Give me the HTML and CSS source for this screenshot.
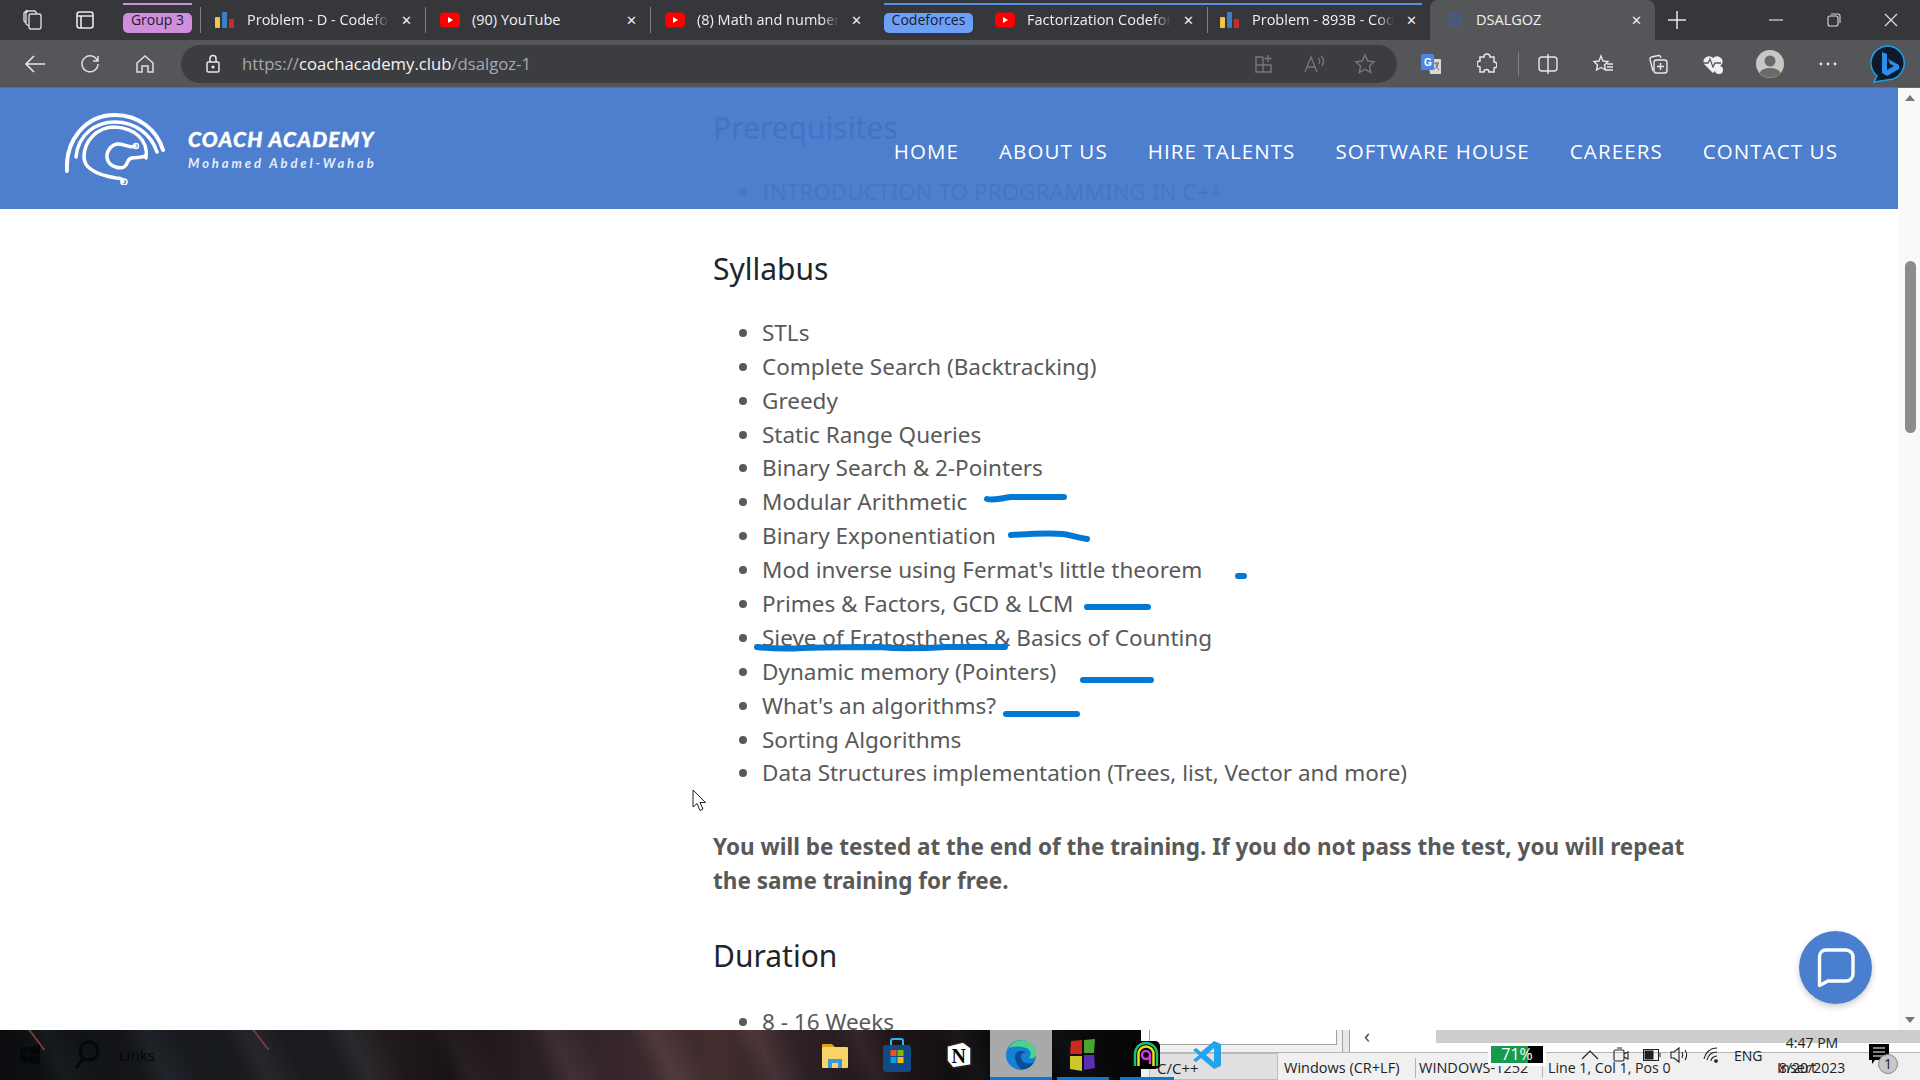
FILE: index.html
```html
<!DOCTYPE html>
<html>
<head>
  <title>DSALGOZ</title>
  <link rel="stylesheet" href="styles.css">
</head>
<body>
  <!-- browser chrome -->
  <div class="tabstrip">
    <div class="strip-btn">
      <svg width="24" height="24" viewBox="0 0 24 24" fill="none" stroke="#d8d8d8" stroke-width="1.4"><rect x="8" y="6" width="12" height="15" rx="2"/><path d="M8 18 5 16V5l2-2h7l2 3M5 15 3 13V5l3-3"/></svg>
    </div>
    <div class="strip-btn strip-btn-2">
      <svg width="20" height="20" viewBox="0 0 20 20" fill="none" stroke="#e8e8e8" stroke-width="1.6"><rect x="2" y="2" width="16" height="16" rx="2.5"/><path d="M2 6h16M6 6v12"/></svg>
    </div>
    <div class="group group-purple">Group 3</div>
    <div class="tab">
      <svg class="fav" width="20" height="16" viewBox="0 0 20 16"><rect x="0" y="5" width="5" height="11" rx="1" fill="#f6c445"/><rect x="7" y="0" width="5" height="16" rx="1" fill="#3b7fc4"/><rect x="14" y="7" width="5" height="9" rx="1" fill="#c62c2c"/></svg>
      <span class="tab-title">Problem - D - Codefo</span><span class="tab-x">✕</span>
    </div>
    <div class="tab">
      <svg class="fav" width="20" height="16" viewBox="0 0 20 16"><rect width="20" height="15" y="0.5" rx="4" fill="#f00"/><path d="M8 5l5 3-5 3z" fill="#fff"/></svg>
      <span class="tab-title tab-title-full">(90) YouTube</span><span class="tab-x">✕</span>
    </div>
    <div class="tab">
      <svg class="fav" width="20" height="16" viewBox="0 0 20 16"><rect width="20" height="15" y="0.5" rx="4" fill="#f00"/><path d="M8 5l5 3-5 3z" fill="#fff"/></svg>
      <span class="tab-title">(8) Math and number</span><span class="tab-x">✕</span>
    </div>
    <div class="tab-group">
      <div class="group group-blue">Codeforces</div>
      <div class="tab tab-factor">
        <svg class="fav" width="20" height="16" viewBox="0 0 20 16"><rect width="20" height="15" y="0.5" rx="4" fill="#f00"/><path d="M8 5l5 3-5 3z" fill="#fff"/></svg>
        <span class="tab-title">Factorization Codefor</span><span class="tab-x">✕</span>
      </div>
      <div class="tab tab-last">
        <svg class="fav" width="20" height="16" viewBox="0 0 20 16"><rect x="0" y="5" width="5" height="11" rx="1" fill="#f6c445"/><rect x="7" y="0" width="5" height="16" rx="1" fill="#3b7fc4"/><rect x="14" y="7" width="5" height="9" rx="1" fill="#c62c2c"/></svg>
        <span class="tab-title">Problem - 893B - Cod</span><span class="tab-x">✕</span>
      </div>
    </div>
    <div class="tab tab-active">
      <svg class="fav" width="18" height="18" viewBox="0 0 18 18" fill="none" stroke="#3a5f9e" stroke-width="2"><circle cx="9" cy="9" r="6"/><circle cx="9" cy="9" r="2" stroke-width="1.5"/></svg>
      <span class="tab-title tab-title-full">DSALGOZ</span><span class="tab-x">✕</span>
    </div>
    <div class="new-tab">
      <svg width="20" height="20" viewBox="0 0 20 20" stroke="#e8e8e8" stroke-width="1.5"><path d="M10 1v18M1 10h18"/></svg>
    </div>
    <div class="window-btns">
      <svg width="14" height="14" viewBox="0 0 14 14" stroke="#ddd" stroke-width="1.2"><path d="M0 7h14"/></svg>
      <svg width="14" height="14" viewBox="0 0 14 14" fill="none" stroke="#ddd" stroke-width="1.1"><rect x="1" y="3" width="10" height="10" rx="2"/><path d="M4 1h7a2 2 0 0 1 2 2v7"/></svg>
      <svg width="14" height="14" viewBox="0 0 14 14" stroke="#ddd" stroke-width="1.2"><path d="M1 1l12 12M13 1 1 13"/></svg>
    </div>
  </div>

  <div class="toolbar">
    <div class="tool tool-first">
      <svg width="22" height="20" viewBox="0 0 22 20" fill="none" stroke="#e8e8e8" stroke-width="1.6"><path d="M21 10H2M10 2l-8 8 8 8"/></svg>
    </div>
    <div class="tool">
      <svg width="20" height="20" viewBox="0 0 20 20" fill="none" stroke="#e0e0e0" stroke-width="1.5"><path d="M17.5 7A8 8 0 1 0 18 10M18 2v5h-5"/></svg>
    </div>
    <div class="tool">
      <svg width="20" height="20" viewBox="0 0 20 20" fill="none" stroke="#e0e0e0" stroke-width="1.5"><path d="M2 9l8-7 8 7v9h-5v-6H7v6H2z"/></svg>
    </div>
    <div class="addressbar">
      <svg class="lock" width="16" height="20" viewBox="0 0 16 20" fill="none" stroke="#e8e8e8" stroke-width="1.5"><rect x="2" y="8" width="12" height="10" rx="1.5"/><path d="M5 8V4.5a3 3 0 0 1 6 0V8"/><circle cx="8" cy="13" r=".8" fill="#e8e8e8"/></svg>
      <span class="url">https://<b>coachacademy.club</b>/dsalgoz-1</span>
      <div class="addr-icons">
        <svg width="20" height="20" viewBox="0 0 20 20" fill="none" stroke="#77787c" stroke-width="1.4"><path d="M9 3H2v15h15v-7H2M9 3v15M14 1v7M10.5 4.5h7"/></svg>
        <svg width="22" height="20" viewBox="0 0 22 20" fill="none" stroke="#77787c" stroke-width="1.3"><path d="M2 18 8 3l6 15M4 13h8M15 4c2 1 2 4 1 6M18 2c3 2 3 7 1 10"/></svg>
        <svg width="22" height="22" viewBox="0 0 22 22" fill="none" stroke="#77787c" stroke-width="1.4"><path d="M11 2l2.8 6 6.2.7-4.6 4.3 1.3 6.5L11 16.2 5.300 19.500 6.600 13 2 8.700 8.200 8z"/></svg>
      </div>
    </div>
    <div class="tool-right">
      <svg class="t-translate" width="22" height="22" viewBox="0 0 22 22"><path d="M8 6h12a1 1 0 0 1 1 1v14H10z" fill="#d8d8d8"/><rect x="1" y="1" width="13" height="16" rx="1.5" fill="#4a86e8"/><text x="4" y="13" font-size="10" font-weight="700" fill="#fff" font-family="Liberation Sans">G</text><path d="M14 10h5M16 10c0 3 1 5 3 7M18 10c0 3-2 5-4 6" stroke="#666" fill="none"/></svg>
      <svg class="t-ext" width="20" height="22" viewBox="0 0 20 22" fill="none" stroke="#e8e8e8" stroke-width="1.5"><path d="M7 4a3 3 0 0 1 6 0h4v5a3 3 0 0 1 0 6v4H12a2.5 2.5 0 0 0-5 0H3v-5a3 3 0 0 1 0-6V4z"/></svg>
      <span class="t-sep"></span>
      <svg class="t-split" width="20" height="20" viewBox="0 0 20 20" fill="none" stroke="#e8e8e8" stroke-width="1.4"><rect x="1" y="3" width="18" height="14" rx="3"/><path d="M10 0v20"/></svg>
      <svg class="t-favs" width="22" height="20" viewBox="0 0 22 20" fill="none" stroke="#e8e8e8" stroke-width="1.4"><path d="M9 2l2 5 5 .5-3.5 3.500 1 5L9 13.500 4.500 16l1-5L2 7.500 7 7zM15 10h6M15 13h6M13 16h8"/></svg>
      <svg class="t-coll" width="22" height="22" viewBox="0 0 22 22" fill="none" stroke="#e8e8e8" stroke-width="1.4"><path d="M6 18 3 6.500a2 2 0 0 1 1.500-2.500l7-1.500a2 2 0 0 1 2 1l.5 1.500"/><rect x="7" y="7" width="13" height="13" rx="2.5"/><path d="M13.5 10v7M10 13.500h7"/></svg>
      <svg class="t-health" width="24" height="22" viewBox="0 0 24 22"><path d="M12 20 3 11a5.500 5.500 0 0 1 9-6 5.500 5.500 0 0 1 9 6z" fill="#f0f0f0"/><path d="M2 10h5l2-4 3 8 2-4h6" fill="none" stroke="#55565a" stroke-width="1.3"/><circle cx="18" cy="17" r="4" fill="#f0f0f0"/></svg>
      <svg class="t-avatar" width="28" height="28" viewBox="0 0 28 28"><circle cx="14" cy="14" r="14" fill="#c9c7c3"/><circle cx="14" cy="11" r="5.5" fill="#6b6a68"/><path d="M3.500 23a11 7 0 0 1 21 0 14 14 0 0 1-21 0z" fill="#6b6a68"/></svg>
      <svg class="t-more" width="18" height="4" viewBox="0 0 18 4" fill="#e8e8e8"><circle cx="2" cy="2" r="1.4"/><circle cx="9" cy="2" r="1.4"/><circle cx="16" cy="2" r="1.4"/></svg>
      <svg class="t-bing" width="38" height="38" viewBox="0 0 38 38"><path d="M19 1a17 17 0 0 1 6 33L6 37l3-6A17 17 0 0 1 19 1z" fill="#0c1a2b" stroke="#1aa0e8" stroke-width="1.5"/><path d="M14 7l5 2v16l7-4-4-2-2-5 11 6v4l-12 7-5-3z" fill="#2a8fe6"/></svg>
    </div>
  </div>

  <!-- page area -->
  <div class="viewport">
    <div class="page">
      <div class="content">
        <h2 class="heading-first">Prerequisites</h2>
        <ul>
          <li>INTRODUCTION TO PROGRAMMING IN C++</li>
        </ul>
        <h2>Syllabus</h2>
        <ul>
          <li>STLs</li>
          <li>Complete Search (Backtracking)</li>
          <li>Greedy</li>
          <li>Static Range Queries</li>
          <li>Binary Search &amp; 2-Pointers</li>
          <li>Modular Arithmetic</li>
          <li>Binary Exponentiation</li>
          <li>Mod inverse using Fermat's little theorem</li>
          <li>Primes &amp; Factors, GCD &amp; LCM</li>
          <li>Sieve of Eratosthenes &amp; Basics of Counting</li>
          <li>Dynamic memory (Pointers)</li>
          <li>What's an algorithms?</li>
          <li>Sorting Algorithms</li>
          <li>Data Structures implementation (Trees, list, Vector and more)</li>
        </ul>
        <p class="note">You will be tested at the end of the training. If you do not pass the test, you will repeat the same training for free.</p>
        <h2 class="heading-duration">Duration</h2>
        <ul>
          <li>8 - 16 Weeks</li>
        </ul>
      </div>

      <!-- pen marks drawn on top of the page -->
      <svg class="ink" width="1898" height="942" viewBox="0 88 1898 942" fill="none" stroke="#0078d4" stroke-width="6" stroke-linecap="round" stroke-linejoin="round">
        <path d="M987 499c6 2 14-1 24-2h53"/>
        <path d="M1011 535c16-1 38-2 52-1 8 1 14 4 24 5"/>
        <path d="M1238 576h6"/>
        <path d="M1087 607h61"/>
        <path d="M757 647c18 2 30 2 46 1 22-1 60-1 76-1 22 2 50 1 68 0 20 0 40 0 58 0"/>
        <path d="M1083 680h68"/>
        <path d="M1006 714h71"/>
      </svg>

      <header class="site-header">
        <div class="brand">
          <svg class="brand-logo" width="100" height="72" viewBox="0 0 100 72" fill="none" stroke="#fff" stroke-width="3.5" stroke-linecap="round">
            <path d="M2 58C0 28 20 2 50 2c24 0 42 15 48 35" stroke-width="4"/>
            <path d="M11 44C13 22 30 9 50 9c20 0 36 12 42 30"/>
            <path d="M81 45C84 26 68 15 50 14 32 14 19 28 19 44c0 12 14 18 32 21 6 0 7 2 7 4"/>
            <path d="M70 33c-6 3-10-3-18-2-8 2-12 10-9 17 3 6 12 8 16 6 5-3 2-8 8-9 6-1 12 0 14-3"/>
            <circle cx="71" cy="33" r="2.5" stroke-width="1.5"/>
            <circle cx="59" cy="69" r="3" stroke-width="1.5"/>
          </svg>
          <div class="brand-text">
            <div class="brand-name">COACH ACADEMY</div>
            <div class="brand-sub">Mohamed Abdel-Wahab</div>
          </div>
        </div>
        <nav class="nav">
          <a>HOME</a>
          <a>ABOUT US</a>
          <a>HIRE TALENTS</a>
          <a>SOFTWARE HOUSE</a>
          <a>CAREERS</a>
          <a>CONTACT US</a>
        </nav>
      </header>

      <div class="chat-btn">
        <svg width="40" height="42" viewBox="0 0 40 42" fill="none" stroke="#fff" stroke-width="3.4" stroke-linejoin="round"><path d="M10 3h20a7 7 0 0 1 7 7v17a7 7 0 0 1-7 7H12l-8.500 4.500V9.500A6.500 6.500 0 0 1 10 3z"/></svg>
      </div>

      <svg class="cursor" width="14" height="23" viewBox="0 0 14 23"><path d="M1 1v17l4-3.500 3 7 3-1.500-3-6.500h5.500z" fill="#fff" stroke="#222" stroke-width="1"/></svg>
    </div>

    <div class="scrollbar">
      <span class="arrow-up"></span>
      <div class="thumb"></div>
      <span class="arrow-down"></span>
    </div>
  </div>

  <!-- taskbar with another window showing through on the right -->
  <div class="taskbar">
    <div class="wallpaper">
      <svg class="start" width="20" height="20" viewBox="0 0 20 20" fill="#050608"><path d="M0 3l8-1v7.500H0zM9 2l11-2v9.500H9zM0 10.500h8V18l-8-1zM9 10.500h11V20L9 18z"/></svg>
      <svg class="search" width="26" height="30" viewBox="0 0 26 30" fill="none" stroke="#060709" stroke-width="3"><circle cx="15" cy="11" r="9"/><path d="M9 19 2 28"/></svg>
      <span class="links">Links</span>
      <div class="task-icons">
        <div class="task-app">
          <svg width="28" height="26" viewBox="0 0 28 26"><path d="M1 2h10l3 3H1z" fill="#d9a31c"/><rect x="1" y="5" width="26" height="21" rx="1" fill="#f7d569"/><path d="M7 26v-9h14v9h-4v-5h-6v5z" fill="#3a96dd"/></svg>
        </div>
        <div class="task-app">
          <svg width="30" height="34" viewBox="0 0 30 34"><path d="M9 8V3a2 2 0 0 1 2-2h8a2 2 0 0 1 2 2v5" fill="none" stroke="#35b4ec" stroke-width="2"/><rect x="1" y="7" width="28" height="27" rx="3" fill="#114a85"/><rect x="8.5" y="12" width="6" height="6" fill="#f25022"/><rect x="15.5" y="12" width="6" height="6" fill="#7fba00"/><rect x="8.5" y="19" width="6" height="6" fill="#00a4ef"/><rect x="15.5" y="19" width="6" height="6" fill="#ffb900"/></svg>
        </div>
        <div class="task-app">
          <svg width="28" height="28" viewBox="0 0 28 28"><path d="M2 5l16-4 8 6v17l-18 3-6-7z" fill="#fff" stroke="#222" stroke-width="1.5"/><text x="6.500" y="22" font-size="20" font-weight="700" font-family="Liberation Serif" fill="#000">N</text></svg>
        </div>
        <div class="task-app task-edge">
          <svg width="30" height="30" viewBox="0 0 30 30"><circle cx="15" cy="15" r="15" fill="#1581d4"/><path d="M2 9C6 1 15-1 21 1c6 2 9 8 9 13 0 4-4 5-7 4 3-3 2-9-3-10C13 6 6 6 2 9z" fill="#4fd38a"/><path d="M9 16c0-5 8-7 11-3-3-1-6 1-5 5 1 5 8 7 13 4-3 5-8 8-13 7 0 0-6-5-6-13z" fill="#0d4d96"/></svg>
          <span class="underline"></span>
        </div>
        <div class="task-app task-win">
          <svg width="28" height="34" viewBox="0 0 28 34"><path d="M2 3l11-1v14H1z" fill="#c92b1f"/><path d="M15 2l11-1-1 14H15z" fill="#4aa62f"/><path d="M1 18h12v15L1 31z" fill="#cdc72c"/><path d="M15 17h10l1 13-11 2z" fill="#5b2fb0"/></svg>
          <span class="underline"></span>
        </div>
      </div>
    </div>
    <div class="behind">
      <div class="behind-top">
        <div class="cell"><div class="cell-inner"></div></div>
        <div class="gutter"></div>
        <div class="hscroll">
          <span class="hscroll-arrow">‹</span>
          <div class="hscroll-thumb"></div>
        </div>
      </div>
      <div class="statusbar">
        <span class="st st-lang">C/C++</span>
        <span class="st st-eol">Windows (CR+LF)</span>
        <span class="st st-enc">WINDOWS-1252</span>
        <span class="st st-pos">Line 1, Col 1, Pos 0</span>
        <span class="st st-ins">Insert</span>
      </div>
      <div class="task-app task-arc">
        <svg width="28" height="28" viewBox="0 0 28 28"><rect width="28" height="28" rx="5" fill="#000"/><path d="M3 25V13a11 11 0 0 1 22 0v12" fill="none" stroke="#16c172" stroke-width="2.5"/><path d="M6.500 25V13a7.500 7.500 0 0 1 15 0v12" fill="none" stroke="#e8e020" stroke-width="2.5"/><circle cx="14" cy="14" r="4" fill="none" stroke="#d03ad8" stroke-width="2.5"/><path d="M18 14v9" stroke="#d03ad8" stroke-width="2.5"/></svg>
        <span class="underline"></span>
      </div>
      <svg class="vscode" width="30" height="30" viewBox="0 0 30 30"><path d="M22 1l7 3v22l-7 3-13-11-5 4-3-2 6-5-6-5 3-2 5 4zM22 8l-8 7 8 7z" fill="#23a3ea"/></svg>
      <div class="cpu"><span class="cpu-text">71%</span></div>
      <div class="tray">
        <svg width="18" height="10" viewBox="0 0 18 10" fill="none" stroke="#222" stroke-width="1.2"><path d="M1 9l8-8 8 8"/></svg>
        <svg width="16" height="16" viewBox="0 0 16 16" fill="none" stroke="#222" stroke-width="1.1"><rect x="1" y="3" width="10" height="11" rx="1.5"/><path d="M11 7l4-2v7l-4-2M4 1h5"/></svg>
        <svg width="18" height="12" viewBox="0 0 18 12" fill="none" stroke="#222"><rect x=".5" y=".5" width="15" height="11"/><rect x="2" y="2" width="8" height="8" fill="#222"/><path d="M17 4v4"/></svg>
        <svg class="tray-vol" width="20" height="18" viewBox="0 0 20 18" fill="none" stroke="#222" stroke-width="1.1"><path d="M1 6h3l5-4v14l-5-4H1zM12 6c1 2 1 4 0 6M15 4c2 3 2 7 0 10"/></svg>
        <svg class="tray-wifi" width="18" height="16" viewBox="0 0 18 16" fill="none" stroke="#222" stroke-width="1.1"><path d="M1 12C2 6 7 1 14 1M4 13c1-4 4-8 10-8M8 14c0-2 2-5 6-5"/><circle cx="13" cy="14" r="1.3" fill="#222"/></svg>
        <span class="tray-lang">ENG</span>
      </div>
      <div class="clock">
        <div>4:47 PM</div>
        <div class="clock-date">8/20/2023</div>
      </div>
      <div class="notif">
        <svg width="20" height="20" viewBox="0 0 20 20"><path d="M0 0h20v16H6l-3 4v-4H0z" fill="#000"/><path d="M4 4h12M4 8h12M4 12h12" stroke="#fff" stroke-width="1.2"/></svg>
        <span class="notif-count">1</span>
      </div>
    </div>
  </div>
</body>
</html>
```

FILE: styles.css
```css
* {
  box-sizing: border-box;
}

body {
  margin: 0;
  width: 1920px;
  height: 1080px;
  overflow: hidden;
  display: flex;
  flex-direction: column;
  font-family: "Noto Sans", "Open Sans", sans-serif;
  background: #fff;
}

/* tab strip */
.tabstrip {
  height: 40px;
  background: #36373b;
  display: flex;
  align-items: center;
  font-family: "Open Sans", "Noto Sans", sans-serif;
  color: #f0f0f0;
  font-size: 14.5px;
  flex: none;
}

.strip-btn {
  width: 24px;
  margin-left: 21px;
  display: flex;
}

.strip-btn-2 {
  margin-left: 30px;
  width: 20px;
  margin-right: 28px;
}

.group {
  height: 20px;
  margin-top: 5px;
  border-radius: 5px;
  color: #1c1c28;
  font-size: 14px;
  line-height: 13px;
  text-align: center;
  position: relative;
  flex: none;
}

.group-purple {
  width: 69px;
  background: #cf8fdc;
  margin-right: 8px;
}

.group-purple::before {
  content: "";
  position: absolute;
  left: 0;
  right: 0;
  top: -10px;
  height: 2px;
  background: #cf8fdc;
}

.group-blue {
  width: 89px;
  background: #6ca0f6;
}

.tab {
  width: 225px;
  height: 40px;
  flex: none;
  display: flex;
  align-items: center;
  padding: 0 12px 1px 14px;
  position: relative;
  border-left: 1px solid #808185;
  border-image: linear-gradient(transparent 8px, #808185 8px, #808185 32px, transparent 32px) 1;
}

.tab-active {
  border-left: 0;
  border-image: none;
  border-radius: 8px 8px 0 0;
  background: #55565a;
  padding-left: 16px;
}

.tab-group {
  display: flex;
  align-items: center;
  height: 40px;
  margin-left: 9px;
  margin-right: 8px;
  position: relative;
}

.tab-group::before {
  content: "";
  position: absolute;
  left: 0;
  right: 0;
  top: 3px;
  height: 2px;
  background: #5b8fe0;
}

.tab-factor {
  width: 234px;
  padding-left: 22px;
  border-left: 0;
  border-image: none;
}

.tab-last {
  width: 215px;
  padding-left: 12px;
  padding-right: 4px;
}

.fav {
  flex: none;
  margin-right: 12px;
}

.tab-title {
  flex: 1;
  overflow: hidden;
  white-space: nowrap;
  -webkit-mask-image: linear-gradient(90deg, #000 88%, transparent);
  mask-image: linear-gradient(90deg, #000 88%, transparent);
}

.tab-title-full {
  -webkit-mask-image: none;
  mask-image: none;
}

.tab-x {
  flex: none;
  width: 14px;
  margin-left: 10px;
  text-align: center;
  font-size: 13px;
}

.new-tab {
  margin-left: 12px;
  display: flex;
}

.window-btns {
  margin-left: auto;
  display: flex;
  width: 129px;
  margin-right: 22px;
  justify-content: space-between;
}

/* address bar row */
.toolbar {
  height: 48px;
  background: #55565a;
  display: flex;
  align-items: center;
  flex: none;
  position: relative;
  border-bottom: 1px solid #6a6b6f;
}

.tool {
  width: 55px;
  display: flex;
  justify-content: center;
}

.tool-first {
  margin-left: 7px;
}

.addressbar {
  width: 1216px;
  height: 38px;
  border-radius: 19px;
  background: #3c3d41;
  display: flex;
  align-items: center;
  padding-left: 24px;
  margin-left: 9px;
  font-family: "Open Sans", "Noto Sans", sans-serif;
}

.lock {
  margin-right: 21px;
}

.url {
  font-size: 16.7px;
  color: #a8a9ab;
}

.url b {
  font-weight: 400;
  color: #f4f4f4;
}

.addr-icons {
  margin-left: auto;
  margin-right: 21px;
  display: flex;
  gap: 29px;
  align-items: center;
}

.tool-right {
  display: flex;
  align-items: center;
  flex: 1;
  padding-left: 23px;
}

.t-ext {
  margin-left: 35px;
}

.t-sep {
  width: 1px;
  height: 24px;
  background: #808185;
  margin-left: 21px;
}

.t-split {
  margin-left: 19px;
}

.t-favs {
  margin-left: 34px;
}

.t-coll {
  margin-left: 33px;
}

.t-health {
  margin-left: 32px;
}

.t-avatar {
  margin-left: 31px;
}

.t-more {
  margin-left: 35px;
}

.t-bing {
  margin-left: 31px;
}

/* page */
.viewport {
  height: 942px;
  display: flex;
  flex: none;
}

.page {
  width: 1898px;
  height: 942px;
  position: relative;
  overflow: hidden;
  background: #fff;
}

.content {
  margin-left: 713px;
  width: 1000px;
  padding-top: 20px;
  color: #595959;
  font-size: 22.5px;
  line-height: 34px;
}

h2 {
  margin: 40px 0 27px;
  font-size: 30px;
  line-height: 40px;
  font-weight: 400;
  color: #212529;
}

.heading-first {
  margin-top: 0;
  margin-bottom: 27px;
}

.heading-duration {
  margin-top: 38px;
  margin-bottom: 29px;
}

ul {
  margin: 0;
  padding-left: 49px;
}

li {
  height: 33.9px;
}

.note {
  font-weight: 700;
  margin: 40px 0 0;
}

.ink {
  position: absolute;
  left: 0;
  top: 0;
}

.site-header {
  position: absolute;
  left: 0;
  top: 0;
  width: 1898px;
  height: 121px;
  background: rgba(68, 119, 203, 0.95);
  display: flex;
  align-items: center;
  padding-left: 65px;
}

.brand {
  display: flex;
  align-items: center;
  margin-top: 1px;
}

.brand-logo {
  flex: none;
}

.brand-text {
  margin-left: 23px;
  color: #fff;
  font-family: Lato, "Noto Sans", sans-serif;
}

.brand-name {
  font-size: 21px;
  line-height: 24px;
  font-weight: 900;
  font-style: italic;
  letter-spacing: 1.2px;
  -webkit-text-stroke: 0.4px #fff;
}

.brand-sub {
  font-size: 13px;
  line-height: 16px;
  margin-top: 4px;
  font-weight: 700;
  font-style: italic;
  letter-spacing: 2.9px;
  color: #e6edf8;
}

.nav {
  margin-left: auto;
  margin-right: 60px;
  margin-top: 5px;
  display: flex;
  gap: 40px;
  color: #fff;
  font-size: 20.5px;
  font-weight: 500;
  letter-spacing: 1.1px;
  font-family: "Open Sans", "Noto Sans", sans-serif;
}

.chat-btn {
  position: absolute;
  left: 1799px;
  top: 843px;
  width: 73px;
  height: 73px;
  border-radius: 50%;
  background: #4a7fcf;
  box-shadow: 0 3px 6px rgba(0, 0, 0, 0.2);
  display: flex;
  align-items: center;
  justify-content: center;
}

.cursor {
  position: absolute;
  left: 692px;
  top: 701px;
}

.scrollbar {
  width: 22px;
  background: #f9f9f9;
  display: flex;
  flex-direction: column;
  align-items: center;
  padding: 7px 0;
}

.arrow-up {
  border: 5px solid transparent;
  border-top: 0;
  border-bottom: 6px solid #777;
  margin-left: 2px;
}

.thumb {
  width: 11px;
  height: 172px;
  background: #8c8c8c;
  border-radius: 6px;
  margin-top: 160px;
  margin-left: 2px;
}

.arrow-down {
  border: 5px solid transparent;
  border-bottom: 0;
  border-top: 6px solid #777;
  margin-top: auto;
  margin-left: 2px;
}

/* taskbar */
.taskbar {
  height: 50px;
  display: flex;
  flex: none;
}

.wallpaper {
  width: 1141px;
  display: flex;
  align-items: center;
  flex: none;
  padding-left: 20px;
  background:
    linear-gradient(53deg, transparent 34px, rgba(200, 90, 70, 0.7) 35.5px, transparent 37px) 0 0 / 100% 20px no-repeat,
    linear-gradient(53deg, transparent 213px, rgba(200, 90, 70, 0.6) 214.5px, transparent 216px) 0 0 / 100% 20px no-repeat,
    repeating-linear-gradient(65deg, rgba(0, 0, 0, 0.22) 0 38px, rgba(255, 255, 255, 0.02) 60px, rgba(0, 0, 0, 0.22) 92px),
    linear-gradient(90deg, #0e1114, #1d2025 180px, #25252a 350px, #2b2226 390px, #1e171b 450px, #33262a 520px, #4a3438 640px, #55393c 720px, #3a2a2e 800px, #2a1d20 880px, #0d0d10 991px, #08090b);
}

.start {
  flex: none;
}

.search {
  margin-left: 34px;
  flex: none;
}

.links {
  margin-left: 19px;
  color: #060709;
  font-size: 15px;
  font-family: "Open Sans", sans-serif;
}

.task-icons {
  margin-left: 649px;
  display: flex;
  align-items: center;
  height: 50px;
}

.task-app {
  width: 62px;
  height: 50px;
  display: flex;
  align-items: center;
  justify-content: center;
  position: relative;
  flex: none;
}

.task-edge {
  background: #a8a9ab;
}

.underline {
  position: absolute;
  bottom: 0;
  left: 5px;
  right: 5px;
  height: 3px;
  background: #0a78d4;
}

.task-edge .underline {
  left: 0;
  right: 0;
}

.behind {
  flex: 1;
  position: relative;
  background: #fff;
  color: #222;
  font-family: "Open Sans", "Noto Sans", sans-serif;
  font-size: 14.5px;
}

.behind-top {
  height: 22px;
  display: flex;
}

.cell {
  width: 194px;
  margin-left: 8px;
  height: 22px;
  border-left: 1px solid #a0a0a0;
  border-right: 1px solid #a0a0a0;
  background: #f0f0f0;
}

.cell-inner {
  width: 187px;
  height: 15px;
  background: #fff;
  border-right: 1px solid #a0a0a0;
  border-bottom: 1px solid #a0a0a0;
}

.gutter {
  width: 6px;
  background: #e8e8e8;
}

.hscroll {
  flex: 1;
  height: 22px;
  border-left: 1px solid #a0a0a0;
  display: flex;
}

.hscroll-arrow {
  width: 86px;
  padding-left: 14px;
  line-height: 12px;
  font-size: 20px;
  color: #444;
}

.hscroll-thumb {
  flex: 1;
  height: 13px;
  background: #cdcdcd;
}

.statusbar {
  height: 28px;
  background: #f0f0f0;
  border-top: 1px solid #b4b4b4;
  position: relative;
  white-space: nowrap;
}

.st {
  position: absolute;
  top: 5px;
  line-height: 20px;
}

/* status bar fields sit at fixed offsets of the window behind */
.st-lang {
  left: 8px;
  top: 0;
  width: 129px;
  height: 27px;
  padding: 4px 0 0 7px;
  background: #e0e0e0;
  border: 1px solid #bdbdbd;
  font-size: 15px;
}

.st-eol {
  left: 143px;
  width: 132px;
  border-right: 1px solid #b4b4b4;
}

.st-enc {
  left: 278px;
  width: 124px;
  border-right: 1px solid #b4b4b4;
}

.st-pos {
  left: 407px;
  font-size: 14.2px;
}

.st-ins {
  left: 636px;
}

.task-arc {
  position: absolute;
  left: -26px;
  top: 0;
}

.task-arc .underline {
  right: 3px;
}

.vscode {
  position: absolute;
  left: 51px;
  top: 10px;
}

.cpu {
  position: absolute;
  left: 347px;
  top: 13px;
  width: 58px;
  height: 23px;
  border: 3px solid #fff;
  background: linear-gradient(90deg, #159b4b 72%, #000 72%);
  color: #fff;
  text-align: center;
  font-size: 16px;
  line-height: 17px;
}

.tray {
  position: absolute;
  left: 440px;
  top: 16px;
  height: 18px;
  display: flex;
  align-items: center;
  gap: 14px;
}

.tray-vol {
  margin-left: -5px;
}

.tray-wifi {
  margin-left: -1px;
}

.tray-lang {
  font-size: 14px;
  margin-left: -1px;
}

.clock {
  position: absolute;
  left: 630px;
  top: 3px;
  width: 82px;
  text-align: center;
  font-size: 14px;
  line-height: 20px;
}

.clock-date {
  margin-top: 5px;
}

.notif {
  position: absolute;
  left: 728px;
  top: 14px;
}

.notif-count {
  position: absolute;
  left: 9px;
  top: 10px;
  width: 20px;
  height: 20px;
  border-radius: 50%;
  background: #c8c8c8;
  border: 1px solid #888;
  text-align: center;
  font-size: 14px;
  line-height: 18px;
}
```
